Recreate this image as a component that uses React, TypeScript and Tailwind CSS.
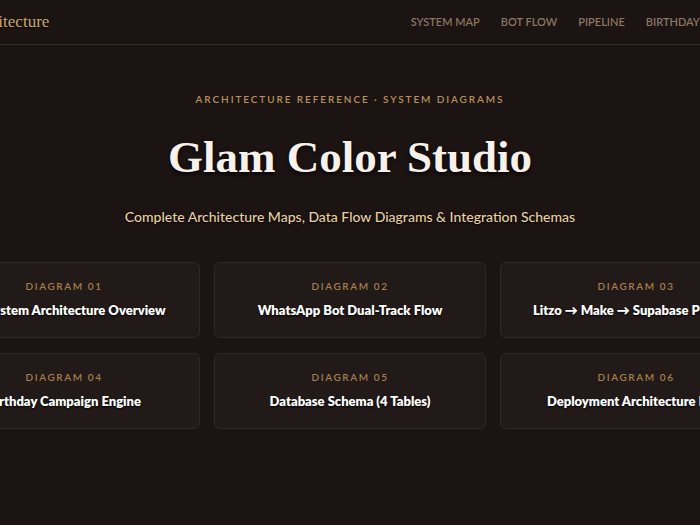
import React from "react";

const navItems = ["System Map", "Bot Flow", "Pipeline", "Birthday", "Database"];

const diagrams = [
  { n: "01", title: "Full System Architecture Overview" },
  { n: "02", title: "WhatsApp Bot Dual-Track Flow" },
  { n: "03", title: "Litzo → Make → Supabase Pipeline" },
  { n: "04", title: "Birthday Campaign Engine" },
  { n: "05", title: "Database Schema (4 Tables)" },
  { n: "06", title: "Deployment Architecture Map" },
];

const App = () => {
  return (
    <div className="min-h-screen bg-[#1c1412] overflow-hidden font-['Lato',sans-serif]">
      <header className="h-[45px] border-b border-[#3a2b1f] flex justify-center">
        <div className="w-[844px] shrink-0 flex items-center justify-between">
          <span className="font-['Liberation_Serif',serif] text-[17px] text-[#c9a66b] [text-shadow:0_1px_2px_rgba(0,0,0,0.8)]">
            GCS Architecture
          </span>
          <nav className="flex gap-[21px] -mr-[4px]">
            {navItems.map((item) => (
              <span key={item} className="text-[11px] font-semibold uppercase text-[#8a7664]">
                {item}
              </span>
            ))}
          </nav>
        </div>
      </header>

      <section className="flex flex-col items-center pt-[47px]">
        <p className="text-[10px] uppercase tracking-[0.19em] font-semibold text-[#b8915a]">
          Architecture Reference · System Diagrams
        </p>
        <h1 className="mt-[28px] font-['Liberation_Serif',serif] font-bold text-[45px] leading-none text-[#f7f1ea] [text-shadow:0_2px_4px_rgba(0,0,0,0.9)]">
          Glam Color Studio
        </h1>
        <p className="mt-[26px] text-[14px] font-medium text-[#e6cfa3] [text-shadow:0_1px_2px_rgba(0,0,0,0.9)]">
          Complete Architecture Maps, Data Flow Diagrams &amp; Integration Schemas
        </p>
      </section>

      <div className="flex justify-center mt-[35px]">
        <div className="w-[844px] shrink-0 grid grid-cols-3 gap-x-[14px] gap-y-[15px]">
          {diagrams.map((d) => (
            <div
              key={d.n}
              className="h-[76px] pb-[1px] rounded-md border border-[#33271f] bg-[#221a18] flex flex-col items-center justify-center gap-[7px]"
            >
              <span className="text-[10px] uppercase tracking-[0.16em] font-semibold text-[#a57f4d]">
                Diagram {d.n}
              </span>
              <span className="text-[13px] font-extrabold text-white whitespace-nowrap [text-shadow:0_1px_2px_rgba(0,0,0,0.9)]">
                {d.title}
              </span>
            </div>
          ))}
        </div>
      </div>
    </div>
  );
};

export default App;
